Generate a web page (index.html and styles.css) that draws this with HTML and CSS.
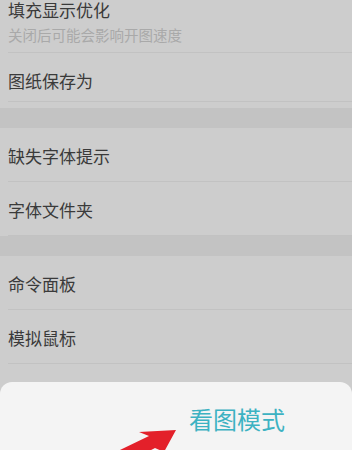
FILE: index.html
```html
<!DOCTYPE html>
<html lang="zh">
<head>
<meta charset="utf-8">
<link rel="stylesheet" href="styles.css">
</head>
<body>
<div class="page">
  <div class="group group-first">
    <div class="item item-top">
      <div class="title title-top">填充显示优化</div>
      <div class="sub">关闭后可能会影响开图速度</div>
    </div>
    <div class="item item-short"><div class="title">图纸保存为</div></div>
  </div>
  <div class="band"></div>
  <div class="group">
    <div class="item"><div class="title">缺失字体提示</div></div>
    <div class="item"><div class="title">字体文件夹</div></div>
  </div>
  <div class="band"></div>
  <div class="group">
    <div class="item"><div class="title">命令面板</div></div>
    <div class="item"><div class="title">模拟鼠标</div></div>
  </div>
  <div class="sheet">
    <div class="sheet-label">看图模式</div>
  </div>
  <svg class="arrow" width="352" height="450" viewBox="0 0 352 450">
    <polygon points="176,430 139,432 149,436 95,462 101,476 155,448 164,452" fill="#e3202a"/>
  </svg>
</div>
</body>
</html>
```
FILE: styles.css
```css
html, body {
  margin: 0;
  padding: 0;
}
body {
  background: #cdcdcd;
  font-family: "Noto Sans CJK SC", "Noto Sans", sans-serif;
}
.page {
  position: relative;
  width: 352px;
  height: 450px;
  overflow: hidden;
  background: #cdcdcd;
}
.group {
  display: flex;
  flex-direction: column;
}
.group-first {
  padding-bottom: 6px;
}
.item {
  margin-left: 8px;
  padding: 18px 0 15px;
  border-bottom: 1px solid #c2c2c2;
}
.item-top {
  padding: 1px 0 7px;
}
.item-short {
  padding: 18px 0 10px;
}
.title {
  font-size: 17px;
  line-height: 20px;
  color: #3a3a3a;
}
.title-top {
  line-height: 18px;
}
.sub {
  margin-top: 6px;
  font-size: 14.5px;
  line-height: 20px;
  color: #a9a9a9;
}
.band {
  height: 20px;
  background: #c3c3c3;
}
.sheet {
  position: absolute;
  left: 0;
  right: 0;
  top: 382px;
  bottom: 0;
  background: #f4f4f4;
  border-radius: 12px 12px 0 0;
  padding: 21px 0 0 189px;
}
.sheet-label {
  font-size: 24px;
  line-height: 32px;
  color: #3cb2c2;
}
.arrow {
  position: absolute;
  left: 0;
  top: 0;
}
```
